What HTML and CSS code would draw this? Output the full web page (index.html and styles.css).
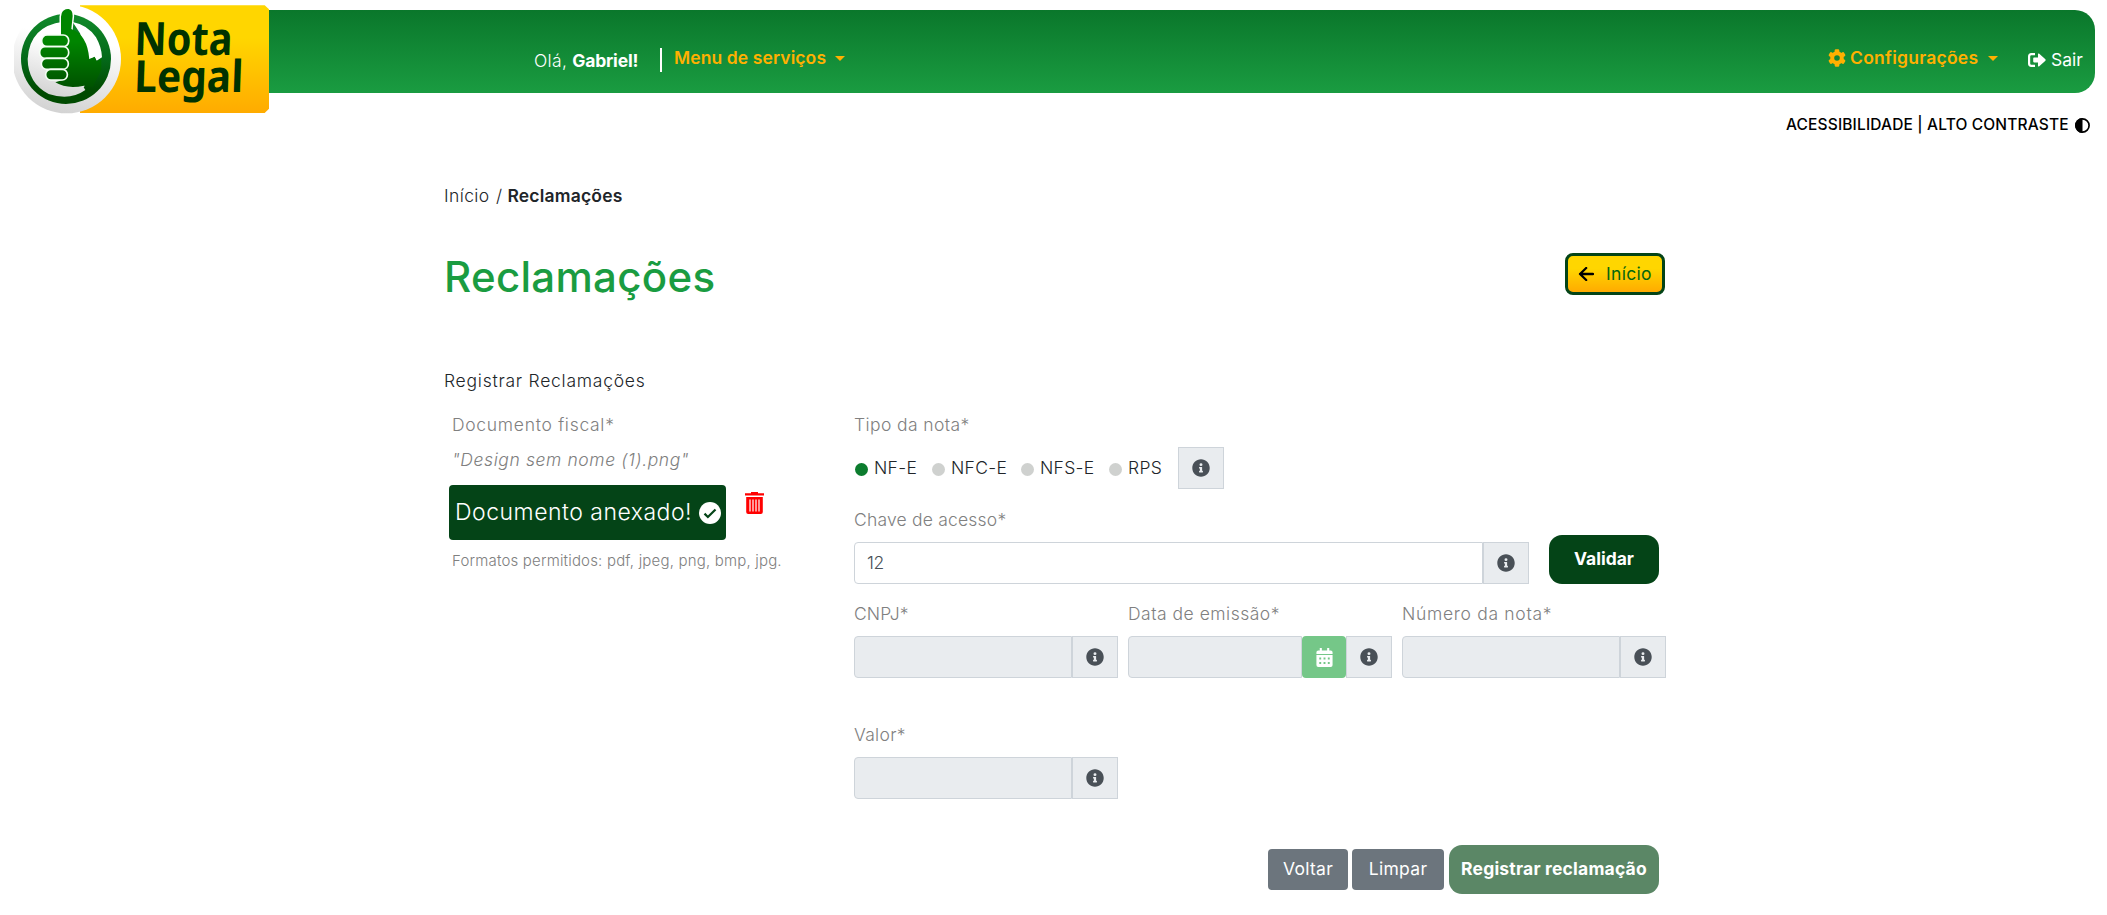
FILE: index.html
```html
<!DOCTYPE html>
<html lang="pt-BR">
<head>
<meta charset="utf-8">
<title>Nota Legal - Reclamações</title>
<link rel="stylesheet" href="styles.css">
</head>
<body>
<svg width="0" height="0" class="sprite" aria-hidden="true">
  <symbol id="info" viewBox="0 0 512 512"><path fill="currentColor" d="M256 8C119 8 8 119 8 256s111 248 248 248 248-111 248-248S393 8 256 8zm0 110a42 42 0 1 1 0 84 42 42 0 0 1 0-84zm56 254a12 12 0 0 1-12 12h-88a12 12 0 0 1-12-12v-24a12 12 0 0 1 12-12h12v-64h-12a12 12 0 0 1-12-12v-24a12 12 0 0 1 12-12h64a12 12 0 0 1 12 12v100h12a12 12 0 0 1 12 12z"/></symbol>
</svg>
<header class="topbar">
  <a class="logo">
    <svg viewBox="42 0 768 345" width="256" height="115">
      <defs>
        <linearGradient id="gold" x1="0" y1="0" x2="0" y2="1"><stop offset=".3" stop-color="#ffd600"/><stop offset="1" stop-color="#ffab00"/></linearGradient>
        <linearGradient id="silver" x1=".6" y1="0" x2=".4" y2="1"><stop offset=".3" stop-color="#fff"/><stop offset="1" stop-color="#d2d2d2"/></linearGradient>
        <linearGradient id="leaf" gradientUnits="userSpaceOnUse" x1="0" y1="24" x2="0" y2="312"><stop offset=".35" stop-color="#008500"/><stop offset=".9" stop-color="#004a00"/></linearGradient>
        <linearGradient id="ring" gradientUnits="userSpaceOnUse" x1="0" y1="42" x2="0" y2="312"><stop offset="0" stop-color="#108a2a"/><stop offset=".5" stop-color="#04691a"/><stop offset=".85" stop-color="#004a00"/></linearGradient>
      </defs>
      <path fill="url(#gold)" d="M240 16H794L807 28V326L794 339H240z"/>
      <circle cx="200" cy="177" r="163" fill="url(#silver)"/>
      <circle cx="198" cy="177" r="135" fill="url(#ring)"/>
      <path fill="url(#silver)" d="M190 65Q88 78 83 177Q84 250 146 282Q210 303 256 270L251 262L256 256L215 240V70z"/>
      <path fill="#fff" d="M218 66Q262 74 288 112Q305 142 306 172L290 182L284 172L266 178L240 100z"/>
      <path fill="url(#leaf)" stroke="#fff" stroke-width="7" d="M182 108V50Q184 24 205 24Q219 27 219 48L215 84V108z"/>
      <path fill="url(#leaf)" d="M183 108V50Q184 27 205 27Q218 29 218 48L214 87Q262 104 268 178L284 170L290 184L304 176V210L278 262L252 257Q200 268 166 247L195 238V108z"/>
      <g fill="url(#leaf)" stroke="#f4fff4" stroke-width="5">
        <rect x="125" y="105" width="81" height="35" rx="16"/><rect x="119" y="140" width="87" height="35" rx="16"/><rect x="124" y="175" width="81" height="33" rx="16"/><rect x="137" y="208" width="65" height="32" rx="15"/>
      </g>
    </svg>
    <svg class="logo-text" viewBox="0 0 130 115" width="130" height="115"><g transform="skewX(-2)"><text x="4" y="55" font-size="46" textLength="98" lengthAdjust="spacingAndGlyphs">Nota</text><text x="5" y="92" font-size="44" textLength="109" lengthAdjust="spacingAndGlyphs">Legal</text></g></svg>
  </a>
  <p class="hello">Olá, <b>Gabriel!</b></p>
  <a class="menu">Menu de serviços</a><i class="caret"></i>
  <a class="config"><svg viewBox="0 0 18 18" width="18" height="18"><g fill="#ffb000"><circle cx="9" cy="9" r="6.8"/><g id="teeth"><rect x="6.7" y=".2" width="4.6" height="17.6" rx="1.2"/><rect x="6.7" y=".2" width="4.6" height="17.6" rx="1.2" transform="rotate(60 9 9)"/><rect x="6.7" y=".2" width="4.6" height="17.6" rx="1.2" transform="rotate(120 9 9)"/></g></g><circle cx="9" cy="9" r="2.8" fill="#118537"/></svg><span>Configurações</span></a><i class="caret"></i>
  <a class="exit"><svg viewBox="0 0 18 14" width="18" height="14"><path fill="none" stroke="#fff" stroke-width="2.2" d="M7 1.1H3.4Q1.1 1.1 1.1 3.4V10.6Q1.1 12.9 3.4 12.9H7"/><path fill="#fff" d="M6 4.6H10V1.2Q10 0 11 .6L17.4 6.3Q18 7 17.4 7.7L11 13.4Q10 14 10 12.8V9.4H6Q5.2 9.4 5.2 8.6V5.4Q5.2 4.6 6 4.6z"/></svg><span>Sair</span></a>
</header>
<div class="access"><span>ACESSIBILIDADE | ALTO CONTRASTE</span><svg viewBox="0 0 15 15" width="15" height="15"><circle cx="7.5" cy="7.5" r="6.6" fill="none" stroke="#000" stroke-width="1.7"/><path d="M7.5 0a7.5 7.5 0 0 0 0 15z"/></svg></div>
<main class="page">
  <nav class="crumbs"><span class="c1">Início</span><span>/</span><b>Reclamações</b></nav>
  <div class="head"><h1>Reclamações</h1>
    <button class="back"><svg viewBox="0 0 16 14" width="16" height="14"><path d="M8.2 1L2 7l6.200 6M2 7h13" fill="none" stroke="#000" stroke-width="2.300" stroke-linecap="round" stroke-linejoin="round"/></svg><span>Início</span></button></div>
  <p class="subtitle">Registrar Reclamações</p>
  <div class="cols">
    <section class="doc">
      <p class="lbl l-doc">Documento fiscal*</p>
      <p class="lbl file">"Design sem nome (1).png"</p>
      <div class="attach">
        <div class="attached"><span>Documento anexado!</span><svg viewBox="0 0 22 22" width="22" height="22"><circle cx="11" cy="11" r="11" fill="#fff"/><path d="M5.500 11.600l3.400 3.400L16.500 7.500" fill="none" stroke="#044417" stroke-width="2.200"/></svg></div>
        <svg class="trash" viewBox="0 0 19 22" width="19" height="22"><path fill="red" d="M6 0h7v1.300h6v2.300H0V1.300h6zM1.200 5h16.600v15q0 2-2 2H3.200q-2 0-2-2z"/><path d="M5 7.500v12M8 7.500v12M11 7.500v12M14 7.500v12" stroke="#fff" stroke-width="1.200"/></svg>
      </div>
      <p class="formats">Formatos permitidos: pdf, jpeg, png, bmp, jpg.</p>
    </section>
    <section class="form">
      <p class="lbl l-tipo">Tipo da nota*</p>
      <div class="radios">
        <label class="r1"><i class="dot on"></i><span>NF-E</span></label><label class="r2"><i class="dot"></i><span>NFC-E</span></label><label class="r3"><i class="dot"></i><span>NFS-E</span></label><label class="r4"><i class="dot"></i><span>RPS</span></label>
        <span class="addon full"><svg width="18" height="18"><use href="#info"/></svg></span>
      </div>
      <p class="lbl l-chave">Chave de acesso*</p>
      <div class="keyrow">
        <div class="group"><div class="input">12</div><span class="addon"><svg width="18" height="18"><use href="#info"/></svg></span></div>
        <button class="pill validate"><span>Validar</span></button>
      </div>
      <div class="grid">
        <div><p class="lbl l-cnpj">CNPJ*</p><div class="group"><div class="input off"></div><span class="addon"><svg width="18" height="18"><use href="#info"/></svg></span></div></div>
        <div><p class="lbl l-data">Data de emissão*</p><div class="group"><div class="input off"></div><span class="cal"><svg viewBox="0 0 17 20" width="17" height="19"><path fill="#fff" d="M3.500 0h2.200v2.500h5.600V0h2.200v2.500H15q2 0 2 2V6.200H0V4.500q0-2 2-2h1.500zM0 7.400h17V18q0 2-2 2H2q-2 0-2-2z"/><path fill="#75c788" d="M3 10h2v2H3zm4.500 0h2v2h-2zM12 10h2v2h-2zM3 14.800h2v2H3zm4.500 0h2v2h-2zm4.500 0h2v2h-2z"/></svg></span><span class="addon"><svg width="18" height="18"><use href="#info"/></svg></span></div></div>
        <div><p class="lbl l-num">Número da nota*</p><div class="group"><div class="input off"></div><span class="addon"><svg width="18" height="18"><use href="#info"/></svg></span></div></div>
        <div><p class="lbl l-valor">Valor*</p><div class="group"><div class="input off"></div><span class="addon"><svg width="18" height="18"><use href="#info"/></svg></span></div></div>
      </div>
      <div class="actions"><button class="grey g1"><span>Voltar</span></button><button class="grey g2"><span>Limpar</span></button><button class="pill send"><span>Registrar reclamação</span></button></div>
    </section>
  </div>
</main>
</body>
</html>
```
FILE: styles.css
```css
* { box-sizing: border-box; }
body { margin: 0; background: #fff; color: #212529; font: 300 17.5px/24px Inter, "Open Sans", sans-serif; letter-spacing: .3px; }
p, h1 { margin: 0; }
span, a, b, p { white-space: nowrap; }
svg { display: block; flex: none; }
button { font: inherit; letter-spacing: inherit; border: 0; padding: 0 0 1px; display: flex; align-items: center; justify-content: center; }
.sprite { position: absolute; }

.topbar { height: 83px; margin: 10px 12px 0 14px; border-radius: 0 20px 20px 0; background: linear-gradient(#0a772b, #1a9c41) 200px 0 no-repeat; display: flex; align-items: flex-start; color: #fff; }
.logo { position: relative; width: 256px; height: 115px; margin-top: -10px; }
.logo-text { position: absolute; left: 118px; top: 0; font-family: "Noto Sans", sans-serif; font-weight: 700; fill: #003200; letter-spacing: 0; }
.hello { margin: 38px 12px 0 264px; width: 128px; height: 24px; line-height: 26px; }
.hello { border-right: 2px solid #fff; }
.hello b { font-weight: 700; letter-spacing: -.2px; }
.menu { margin-top: 36px; width: 152px; color: #ffb000; font-weight: 600; letter-spacing: .1px; }
.caret { width: 0; height: 0; margin: 46px 0 0 9px; border: 5px solid transparent; border-top-color: #ffb000; border-bottom: 0; }
.config { margin: 36px 0 0 983px; display: flex; align-items: center; gap: 4px; color: #ffb000; font-weight: 600; width: 151px; letter-spacing: .25px; }
.exit { margin: 38px 0 0 30px; display: flex; align-items: center; gap: 5px; font-weight: 400; letter-spacing: 0; }

.access { display: flex; justify-content: flex-end; align-items: center; gap: 4px; margin: 21px 17px 0 0; height: 22px; color: #000; font-size: 15.5px; font-weight: 500; letter-spacing: .15px; }
.access span { width: 285px; }

.page { width: 1222px; margin: 48px 0 0 444px; }
.crumbs { display: flex; gap: 5px; }
.crumbs .c1 { width: 47px; letter-spacing: .4px; }
.crumbs b { font-weight: 600; letter-spacing: .2px; }
.head { display: flex; justify-content: space-between; margin-top: 45px; padding-right: 1px; }
h1 { font-size: 42px; line-height: 48px; font-weight: 500; color: #1a9c41; letter-spacing: .3px; }
.back { width: 100px; height: 42px; border: 3px solid #044417; border-radius: 8px; background: linear-gradient(#ffd600 35%, #ffab00); color: #04670f; gap: 12px; font-weight: 400; }
.subtitle { margin-top: 68px; letter-spacing: .75px; }
.cols { display: flex; margin-top: 20px; }
.doc { width: 410px; }
.lbl { color: #808080; }
.l-doc { letter-spacing: .7px; }
.l-tipo { letter-spacing: .4px; }
.l-chave { letter-spacing: .2px; }
.l-cnpj { letter-spacing: .1px; }
.l-data { letter-spacing: .5px; }
.l-num { letter-spacing: .7px; }
.doc .lbl, .formats { padding-left: 8px; }
.doc .file { font-style: italic; margin-top: 11px; letter-spacing: .6px; }
.attach { display: flex; margin: 13px 0 0 5px; gap: 19px; }
.attached { width: 277px; height: 55px; border-radius: 4px; background: #044417; color: #fff; display: flex; align-items: center; padding-left: 6px; font-size: 23px; letter-spacing: .5px; }
.attached span { width: 237px; margin-right: 7px; padding-bottom: 2px; }
.trash { margin-top: 7px; }
.formats { color: #808080; font-size: 15px; margin-top: 9px; letter-spacing: .18px; }
.form { width: 812px; }
.radios { display: flex; height: 42px; align-items: center; margin-top: 10px; padding-left: 1px; }
.radios label { display: flex; align-items: center; gap: 6px; }
.r1 { width: 77px; } .r2 { width: 89px; } .r3 { width: 88px; } .r4 { width: 69px; }
.dot { width: 13px; height: 13px; border-radius: 50%; background: #cfd1cf; margin-top: 3px; flex: none; }
.dot.on { background: #0c7c2e; }
.l-chave { margin-top: 19px; }
.keyrow { display: flex; align-items: flex-end; margin-top: 3px; height: 49px; }
.keyrow .group { width: 675px; margin-right: 20px; }
.group { display: flex; height: 42px; }
.input { flex: 1; border: 1px solid #ced4da; border-radius: 4px 0 0 4px; padding: 8px 12px; color: #495057; background: #fff; letter-spacing: -.5px; }
.input.off, .addon { background: #e9ecef; }
.addon { width: 46px; height: 42px; border: 1px solid #ced4da; color: #495057; display: flex; align-items: center; justify-content: center; }
.cal { width: 44px; background: #75c788; border-radius: 4px; display: flex; align-items: center; justify-content: center; }
.pill { height: 49px; border-radius: 13px; background: #044417; color: #fff; font-weight: 700; letter-spacing: 0; padding-bottom: 2px; }
.validate { width: 110px; }
.grid { display: grid; grid-template-columns: repeat(3, 264px); column-gap: 10px; row-gap: 45px; margin-top: 18px; }
.grid .group { margin-top: 10px; }
.actions { display: flex; justify-content: flex-end; align-items: center; padding-right: 7px; margin-top: 46px; }
.grey { height: 41px; border-radius: 4px; background: #6c757d; color: #fff; font-weight: 400; padding-bottom: 2px; }
.g1 { width: 80px; margin-right: 4px; } .g2 { width: 92px; margin-right: 5px; }
.send { width: 210px; background: #5b8766; letter-spacing: .2px; }
```
